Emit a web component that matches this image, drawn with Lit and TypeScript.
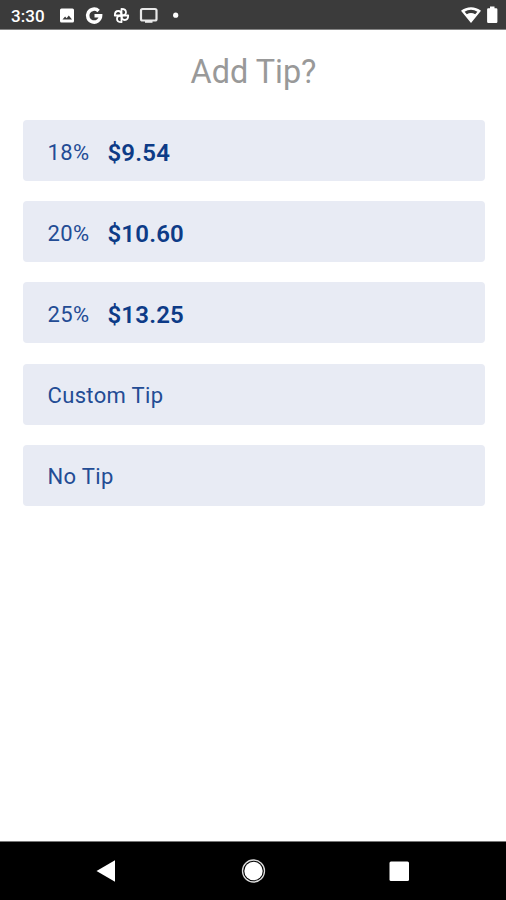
import { LitElement, html, css, svg } from "lit";
import { customElement, property } from "lit/decorators.js";

@customElement("status-bar")
class StatusBar extends LitElement {
  static styles = css`
    :host { display: flex; align-items: center; height: 30px; box-sizing: border-box; background: #3b3b3b; border-bottom: 1px solid #848484; color: #fff; }
    .time { width: 46px; padding: 3px 0 0 11px; font: 500 17px/20px "Roboto", sans-serif; letter-spacing: 0.1px; }
    svg { display: block; flex: none; }
    .spacer { flex: 1; }
  `;
  render() {
    return html`
      <span class="time">3:30</span>
      <svg width="130" height="29" viewBox="57 0 130 29" fill="none">
        <path fill="#fff" fill-rule="evenodd" d="M61.5 8.5h11a1.5 1.5 0 0 1 1.5 1.5v11a1.5 1.5 0 0 1-1.5 1.5h-11A1.5 1.5 0 0 1 60 21V10a1.5 1.5 0 0 1 1.5-1.5zM62.5 19.5H72l-3.200-4-2.200 2.700-1.500-1.700z"/>
        <path stroke="#fff" stroke-width="3.500" d="M98.600 10.900A6.500 6.500 0 1 0 100.600 15.800H94.500"/>
        ${[0, 90, 180, 270].map(
          (a) => svg`<path transform="rotate(${a} 121.500 15.500)" stroke="#fff" stroke-width="1.800" stroke-linejoin="round" d="M121.500 15.500V8.800C124.500 8.800 126 10.500 126 12.300S124.500 15.500 121.500 15.500"/>`,
        )}
        <rect x="141" y="9" width="15.500" height="11.500" rx="1.500" stroke="#e8e8e8" stroke-width="2.200"/>
        <path stroke="#e8e8e8" stroke-width="2" d="M145 21.800h7.500"/>
        <circle cx="175.700" cy="15.200" r="2.600" fill="#fff"/>
      </svg>
      <span class="spacer"></span>
      <svg width="46" height="29" viewBox="460 0 46 29">
        <path fill="#fff" fill-rule="evenodd" d="M461 10.800C466.500 6 475.500 6 481 10.800L471 23zM464.600 11.800L466.800 14.200C469.500 12.700 472.500 12.700 475.200 14.200L477.400 11.800C473.500 9 468.500 9 464.600 11.800z"/>
        <path fill="#fff" d="M490 6.500h4.500v1.800h1.700a1.200 1.200 0 0 1 1.200 1.200v12.300a1.200 1.200 0 0 1-1.200 1.200h-7.900a1.200 1.200 0 0 1-1.200-1.200V9.500a1.200 1.200 0 0 1 1.200-1.200H490z"/>
      </svg>
    `;
  }
}

@customElement("tip-option")
class TipOption extends LitElement {
  @property() label = "";
  @property() amount = "";
  static styles = css`
    :host { display: flex; align-items: center; height: 61px; padding: 4px 25px 0; box-sizing: border-box; border-radius: 4px; background: #e8ebf4; font: 400 22px/26px "Roboto", sans-serif; }
    .label { letter-spacing: 0.35px; color: #234c94; }
    .amount { margin-left: 18px; font-weight: 600; font-size: 24px; letter-spacing: 0.2px; color: #0d3b87; }
  `;
  render() {
    return html`<span class="label">${this.label}</span>${this.amount
        ? html`<span class="amount">${this.amount}</span>`
        : ""}`;
  }
}

@customElement("nav-bar")
class NavBar extends LitElement {
  static styles = css`
    :host { display: block; height: 59px; background: #000; border-top: 1px solid #777; box-sizing: border-box; }
    svg { display: block; }
  `;
  render() {
    return html`<svg width="506" height="58" viewBox="0 842 506 58">
      <path fill="#fff" d="M96.500 871L115 860.300V881.700z"/>
      <circle cx="253.500" cy="871" r="11" fill="none" stroke="#ddd" stroke-width="1.300"/>
      <circle cx="253.500" cy="871" r="9.200" fill="#fff"/>
      <rect x="389.500" y="861.500" width="19.500" height="19.500" rx="1.500" fill="#fff"/>
    </svg>`;
  }
}

const options = [
  { label: "18%", amount: "$9.54" },
  { label: "20%", amount: "$10.60" },
  { label: "25%", amount: "$13.25" },
  { label: "Custom Tip", amount: "" },
  { label: "No Tip", amount: "" },
];

@customElement("app-root")
class AppRoot extends LitElement {
  static styles = css`
    :host { display: flex; flex-direction: column; height: 900px; background: #fff; }
    h1 { margin: 22px 0 28px; padding-left: 1px; text-align: center; font: 400 32.4px/40px "Roboto", sans-serif; color: #999; }
    .options { flex: 1; display: flex; flex-direction: column; gap: 20.2px; padding: 0 21.5px 0 22.5px; }
  `;
  render() {
    return html`
      <status-bar></status-bar>
      <h1>Add Tip?</h1>
      <div class="options">
        ${options.map((o) => html`<tip-option .label=${o.label} .amount=${o.amount}></tip-option>`)}
      </div>
      <nav-bar></nav-bar>
    `;
  }
}
